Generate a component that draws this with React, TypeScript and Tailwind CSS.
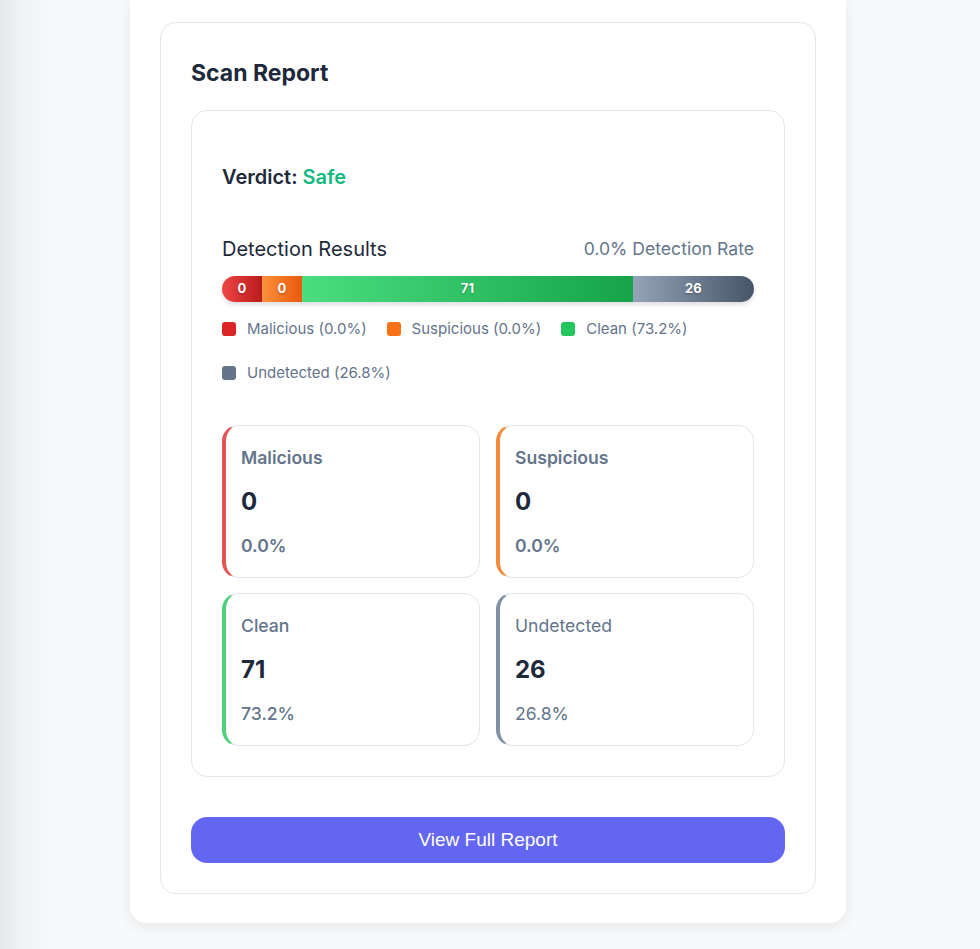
import React from "react";

const segments = [
  { label: "0", grow: 0, cls: "w-[40px] bg-[linear-gradient(90deg,#ef4444,#b91c1c)] rounded-l-full" },
  { label: "0", grow: 0, cls: "w-[40px] bg-[linear-gradient(90deg,#fb923c,#ea580c)]" },
  { label: "71", grow: 71, cls: "bg-[linear-gradient(90deg,#4ade80,#16a34a)]" },
  { label: "26", grow: 26, cls: "bg-[linear-gradient(90deg,#94a3b8,#475569)] rounded-r-full" },
];

const legend = [
  { text: "Malicious (0.0%)", color: "bg-[#dc2626]" },
  { text: "Suspicious (0.0%)", color: "bg-[#f97316]" },
  { text: "Clean (73.2%)", color: "bg-[#22c55e]" },
  { text: "Undetected (26.8%)", color: "bg-[#64748b]" },
];

const cards = [
  { label: "Malicious", value: "0", pct: "0.0%", border: "border-l-[#e55353]", weight: "font-semibold" },
  { label: "Suspicious", value: "0", pct: "0.0%", border: "border-l-[#f38b3c]", weight: "font-semibold" },
  { label: "Clean", value: "71", pct: "73.2%", border: "border-l-[#4fd17a]", weight: "font-medium" },
  { label: "Undetected", value: "26", pct: "26.8%", border: "border-l-[#8190a5]", weight: "font-normal" },
];

export default function App() {
  return (
    <div
      className="min-h-[949px] w-full bg-[linear-gradient(90deg,#e6e7e9_0px,#f1f2f4_20px,#f8f9fa_60px)] flex justify-center pr-[4px]"
      style={{ fontFamily: "Inter, 'Noto Sans', sans-serif" }}
    >
      <div className="w-[716px] h-[923px] bg-white rounded-b-2xl shadow-[0_4px_14px_rgba(0,0,0,0.08)] px-[30px] pt-[22px] pb-[30px]">
        <div className="border border-[#e2e8f0] rounded-2xl px-[30px] pt-[30px] pb-[30px]">
          <h2 className="text-[23px] leading-[40px] font-bold text-[#1e293b] mb-[17px]">Scan Report</h2>

          <div className="border border-[#e2e8f0] rounded-2xl p-[30px]">
            <div className="mt-[22px] text-[20px] leading-[28px] font-semibold text-[#1e293b]">
              Verdict: <span className="text-[#10b981]">Safe</span>
            </div>

            <div className="mt-[44px] flex items-center justify-between">
              <span className="text-[20px] leading-[28px] text-[#1e293b]">Detection Results</span>
              <span className="text-[17.6px] leading-[24px] text-[#64748b]">0.0% Detection Rate</span>
            </div>

            <div className="mt-[13px] flex h-[26px] w-full rounded-full shadow-[0_3px_4px_rgba(0,0,0,0.12)]">
              {segments.map((s, i) => (
                <div
                  key={i}
                  className={`${s.cls} flex items-center justify-center text-white text-[13px] font-bold [text-shadow:0_1px_2px_rgba(0,0,0,0.3)]`}
                  style={s.grow ? { flexGrow: s.grow, flexBasis: 0 } : undefined}
                >
                  {s.label}
                </div>
              ))}
            </div>

            <div className="mt-[17px] flex flex-wrap gap-x-5 gap-y-6">
              {legend.map((l) => (
                <div key={l.text} className="flex items-center gap-[11px] h-[20px]">
                  <span className={`w-[14px] h-[14px] rounded-[3px] ${l.color}`} />
                  <span className="text-[15px] leading-[20px] text-[#64748b]">{l.text}</span>
                </div>
              ))}
            </div>

            <div className="mt-[42px] grid grid-cols-2 gap-x-4 gap-y-[15px]">
              {cards.map((c) => (
                <div
                  key={c.label}
                  className={`h-[153px] rounded-2xl border border-[#e2e8f0] border-l-4 ${c.border} pl-[15px] pt-[20px]`}
                >
                  <div className={`text-[17.6px] leading-[24px] text-[#64748b] ${c.weight}`}>{c.label}</div>
                  <div className="mt-4 text-[24px] leading-[32px] font-bold text-[#1e293b]">{c.value}</div>
                  <div className={`mt-4 text-[17.6px] leading-[24px] text-[#64748b] ${c.weight}`}>{c.pct}</div>
                </div>
              ))}
            </div>
          </div>

          <button
            className="mt-[40px] w-full h-[46px] rounded-2xl bg-[#6366f1] text-white text-[19px]"
            style={{ fontFamily: "'Liberation Sans', Arial, sans-serif" }}
          >
            View Full Report
          </button>
        </div>
      </div>
    </div>
  );
}
